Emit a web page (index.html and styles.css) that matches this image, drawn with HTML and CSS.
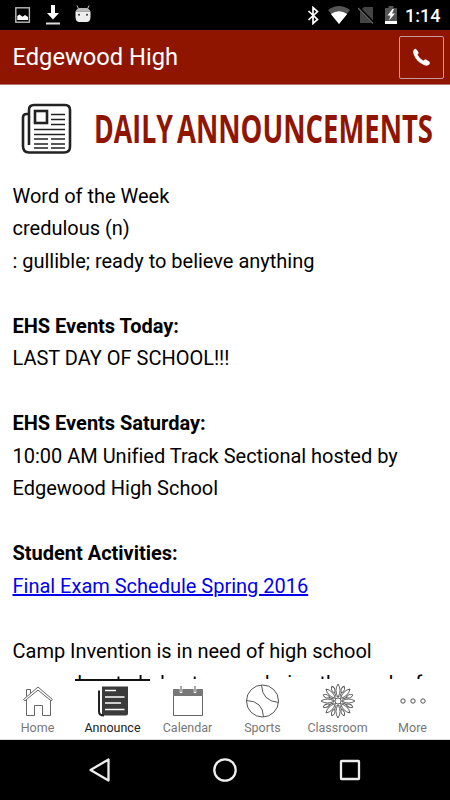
FILE: index.html
```html
<!DOCTYPE html>
<html lang="en">
<head>
<meta charset="utf-8">
<title>Edgewood High</title>
<link rel="stylesheet" href="styles.css">
</head>
<body>
<div class="status">
  <div class="status-left">
    <svg width="16" height="19" viewBox="0 0 16 19"><rect x=".8" y="2.800" width="13.600" height="14.400" fill="none" stroke="#bbb" stroke-width="1.400"/><path d="M2.300 15V11l2.200-1.500 3 2.300 2.500-1.800 3 2V15z" fill="#fff"/></svg>
    <svg class="download" width="16" height="20" viewBox="0 0 16 20"><path d="M6 0h4v8h4l-6 6.500L2 8h4z" fill="#fff"/><path d="M1 18.500h14" stroke="#ddd" stroke-width="2"/></svg>
    <svg class="robot" width="16" height="18" viewBox="0 0 16 18"><path d="M3.500 4L2 .5M12.500 4L14 .5" stroke="#bbb"/><path d="M.5 6.500Q2 3 5 3h6q3 0 4.500 3.500z" fill="#bbb"/><path d="M.5 6.500h15V12q0 5-4 5h-7q-4 0-4-5z" fill="#eee"/><circle cx="4" cy="9.700" r="1" fill="#333"/><circle cx="12" cy="9.700" r="1" fill="#333"/></svg>
  </div>
  <div class="status-right">
    <svg width="12" height="19" viewBox="0 0 12 19"><path d="M1.500 5l9 8.500-4.500 4V1.500l4.500 4-9 8.500" fill="none" stroke="#fff" stroke-width="1.700"/></svg>
    <svg class="wifi" width="22" height="18" viewBox="0 0 22 18"><path d="M0 4Q11-4 22 4L11 18z" fill="#555"/><path d="M2.800 8Q11 2.500 19.200 8L11 18z" fill="#fff"/></svg>
    <svg class="sim" width="17" height="18" viewBox="0 0 17 18"><path d="M6 1h9v16H2V5z" fill="#444"/><path d="M0 1l16 16.500" stroke="#000" stroke-width="3"/><path d="M0 2l15 15.500" stroke="#666" stroke-width="1.300"/></svg>
    <svg class="battery" width="12" height="18" viewBox="0 0 12 18"><path d="M0 2h3.500V0h5v2H12v13H0z" fill="#555"/><path d="M0 15h12v3H0z" fill="#fff"/><path d="M7.500 3L2.500 9.500h3L4 14.500l6-7H7L9 3z" fill="#fff"/></svg>
    <span class="clock">1:14</span>
  </div>
</div>
<header class="header">
  <h1>Edgewood High</h1>
  <button class="call" aria-label="Call"><svg width="20" height="20" viewBox="0 0 20 20"><path d="M1.400 3.500Q2.200 1.400 3.900 2Q5.600 3 6.500 5.500Q6.800 7 5.500 7.800Q7.400 11.300 11.200 13.700Q12.400 12 14.100 12.500L17.200 14.400Q18.800 15.700 17.200 17.600Q15.500 19.300 12.500 18.300Q4.200 14.800 1.500 7Q1 5 1.400 3.500z" fill="#fff"/></svg></button>
</header>
<main class="content">
  <div class="banner">
    <svg width="52" height="52" viewBox="0 0 52 52" fill="none" stroke="#222"><path d="M8 11H5.500Q2 11 2 14.500V43q0 6.500 6 6.500h35q6 0 6-6V7q0-5-5-5H13Q8 2 8 7v35" stroke-width="2.600"/><rect x="14" y="8" width="12" height="12" stroke-width="2.600"/><path d="M30 11.500h14M30 16.500h14M30 21.500h14M13 26.500h31M13 31.500h31M13 36h14M30 36h14M13 41h14M30 41h14M13 45h14M30 45h14" stroke-width="1.500"/></svg>
    <svg class="banner-title" width="346" height="56" viewBox="0 0 346 56"><text x="0" y="40" textLength="79" lengthAdjust="spacingAndGlyphs">DAILY</text><text x="83" y="40" textLength="256" lengthAdjust="spacingAndGlyphs">ANNOUNCEMENTS</text></svg>
  </div>
  <p>Word of the Week<br>credulous (n)<br>: gullible; ready to believe anything</p>
  <p><b>EHS Events Today:</b><br>LAST DAY OF SCHOOL!!!</p>
  <p><b>EHS Events Saturday:</b><br>10:00 AM Unified Track Sectional hosted by<br>Edgewood High School</p>
  <p><b>Student Activities:</b><br><a href="#">Final Exam Schedule Spring 2016</a></p>
  <p>Camp Invention is in need of high school<br>counselors to help at camp during the week of</p>
</main>
<nav class="tabs">
  <div class="tab"><svg width="36" height="36" viewBox="0 0 36 36" fill="none" stroke="#666" stroke-width="1"><path d="M3.500 16.500L18 4l14.500 12.500-1.500 1.300L18 7 5 17.800zM6.500 13.500V6.500h4V10M6.500 17v15.500h8v-10h8v10h8V17"/></svg><span>Home</span></div>
  <div class="tab active"><svg width="36" height="36" viewBox="0 0 36 36"><path d="M7 3.500h26v27q0 2-2 2H7z" fill="#3b3b3b"/><path d="M4 7.500v21q0 4 5 4" fill="none" stroke="#222" stroke-width="2"/><path d="M10 7.500h11M10 14h19.500M10 20h16M10 26.500h19.500" stroke="#fff" stroke-width="1.700"/></svg><span>Announce</span></div>
  <div class="tab"><svg width="36" height="36" viewBox="0 0 36 36"><path d="M3.500 6.500h29v26h-29z" fill="none" stroke="#666"/><path d="M3 6h30v7H3z" fill="#777"/><path d="M11 5v5M25 5v5" stroke="#fff" stroke-width="2.500"/><path d="M11 3v6M25 3v6" stroke="#555"/></svg><span>Calendar</span></div>
  <div class="tab"><svg width="36" height="36" viewBox="0 0 36 36" fill="none" stroke="#555" stroke-width="1"><circle cx="17.500" cy="18" r="16"/><path d="M16.500 2Q17 18 33.500 19.500M1.500 17.500Q18 18 18.500 34"/></svg><span>Sports</span></div>
  <div class="tab"><svg width="36" height="36" viewBox="0 0 36 36" fill="none" stroke="#555" stroke-width=".9"><defs><path id="petal" d="M18 14.500Q14 7 18 1Q22 7 18 14.500z"/><path id="leaf" d="M18 9.500Q14.800 5 18 2Q21.200 5 18 9.500zM18 9.500v4"/></defs><circle cx="18" cy="18" r="3"/><use href="#petal"/><use href="#petal" transform="rotate(45 18 18)"/><use href="#petal" transform="rotate(90 18 18)"/><use href="#petal" transform="rotate(135 18 18)"/><use href="#petal" transform="rotate(180 18 18)"/><use href="#petal" transform="rotate(225 18 18)"/><use href="#petal" transform="rotate(270 18 18)"/><use href="#petal" transform="rotate(315 18 18)"/><use href="#leaf" transform="rotate(22.500 18 18)"/><use href="#leaf" transform="rotate(67.500 18 18)"/><use href="#leaf" transform="rotate(112.500 18 18)"/><use href="#leaf" transform="rotate(157.500 18 18)"/><use href="#leaf" transform="rotate(202.500 18 18)"/><use href="#leaf" transform="rotate(247.500 18 18)"/><use href="#leaf" transform="rotate(292.500 18 18)"/><use href="#leaf" transform="rotate(337.500 18 18)"/></svg><span>Classroom</span></div>
  <div class="tab"><svg width="36" height="36" viewBox="0 0 36 36" fill="none" stroke="#555"><circle cx="8" cy="18" r="2.200"/><circle cx="18" cy="18" r="2.200"/><circle cx="28" cy="18" r="2.200"/></svg><span>More</span></div>
</nav>
<div class="system-nav">
  <svg width="24" height="26" viewBox="0 0 24 26"><path d="M2.500 13L20.500 2.500v21z"/></svg>
  <svg width="24" height="26" viewBox="0 0 24 26"><circle cx="12" cy="13" r="10.700"/></svg>
  <svg width="24" height="26" viewBox="0 0 24 26"><rect x="3" y="4" width="18" height="18" rx=".5"/></svg>
</div>
</body>
</html>
```

FILE: styles.css
```css
* { box-sizing: border-box; }
body {
  margin: 0;
  width: 450px;
  height: 800px;
  overflow: hidden;
  display: flex;
  flex-direction: column;
  font-family: Roboto, sans-serif;
  color: #000;
  background: #fff;
}
svg { display: block; flex: none; }
.status {
  height: 30px;
  flex: none;
  background: #000;
  display: flex;
  justify-content: space-between;
  align-items: flex-start;
}
.status-left { display: flex; padding: 5px 0 0 15px; }
.download { margin-left: 14px; }
.robot { margin-left: 14px; }
.status-right { display: flex; padding: 6px 10px 0 0; }
.wifi { margin-left: 9px; }
.sim { margin-left: 8px; }
.battery { margin-left: 10px; }
.clock {
  margin-left: 8px;
  width: 35px;
  color: #fff;
  font-size: 18px;
  font-weight: 500;
  line-height: 20px;
}
.header {
  height: 55px;
  flex: none;
  background: #901500;
  border-bottom: 1px solid #b37970;
  display: flex;
  align-items: center;
  justify-content: space-between;
  padding: 0 6px 0 12.500px;
}
.header h1 {
  margin: 0;
  color: #fff;
  font-size: 23.700px;
  font-weight: 400;
}
.call {
  width: 45px;
  height: 43px;
  padding: 0;
  background: none;
  border: 1px solid #c69b95;
  border-radius: 2px;
  display: flex;
  align-items: center;
  justify-content: center;
}
.content {
  height: 594px;
  flex: none;
  overflow: hidden;
}
.banner {
  height: 94.700px;
  padding: 18px 0 0 21px;
  display: flex;
}
.banner-title {
  margin-left: 21px;
  fill: #901500;
  font-family: "Open Sans", sans-serif;
  font-weight: 700;
  font-size: 40px;
}
.content p {
  margin: 0 0 32.500px;
  padding-left: 12.500px;
  font-size: 20px;
  line-height: 32.500px;
  letter-spacing: -.01px;
  white-space: nowrap;
}
.content a { color: #00e; }
.tabs {
  height: 61px;
  flex: none;
  display: grid;
  grid-template-columns: repeat(6, 75px);
  border-bottom: 1px solid #ddd;
}
.tab {
  border-top: 2px solid transparent;
  display: flex;
  flex-direction: column;
  align-items: center;
  padding-top: 2px;
  color: #777;
  font-size: 12.500px;
  line-height: 18px;
}
.tab.active { border-top-color: #111; color: #222; }
.system-nav {
  flex: 1;
  background: #000;
  display: flex;
  justify-content: space-between;
  align-items: center;
  padding: 0 88px;
}
.system-nav svg {
  fill: none;
  stroke: #eee;
  stroke-width: 2.300;
  stroke-linejoin: round;
}
```
